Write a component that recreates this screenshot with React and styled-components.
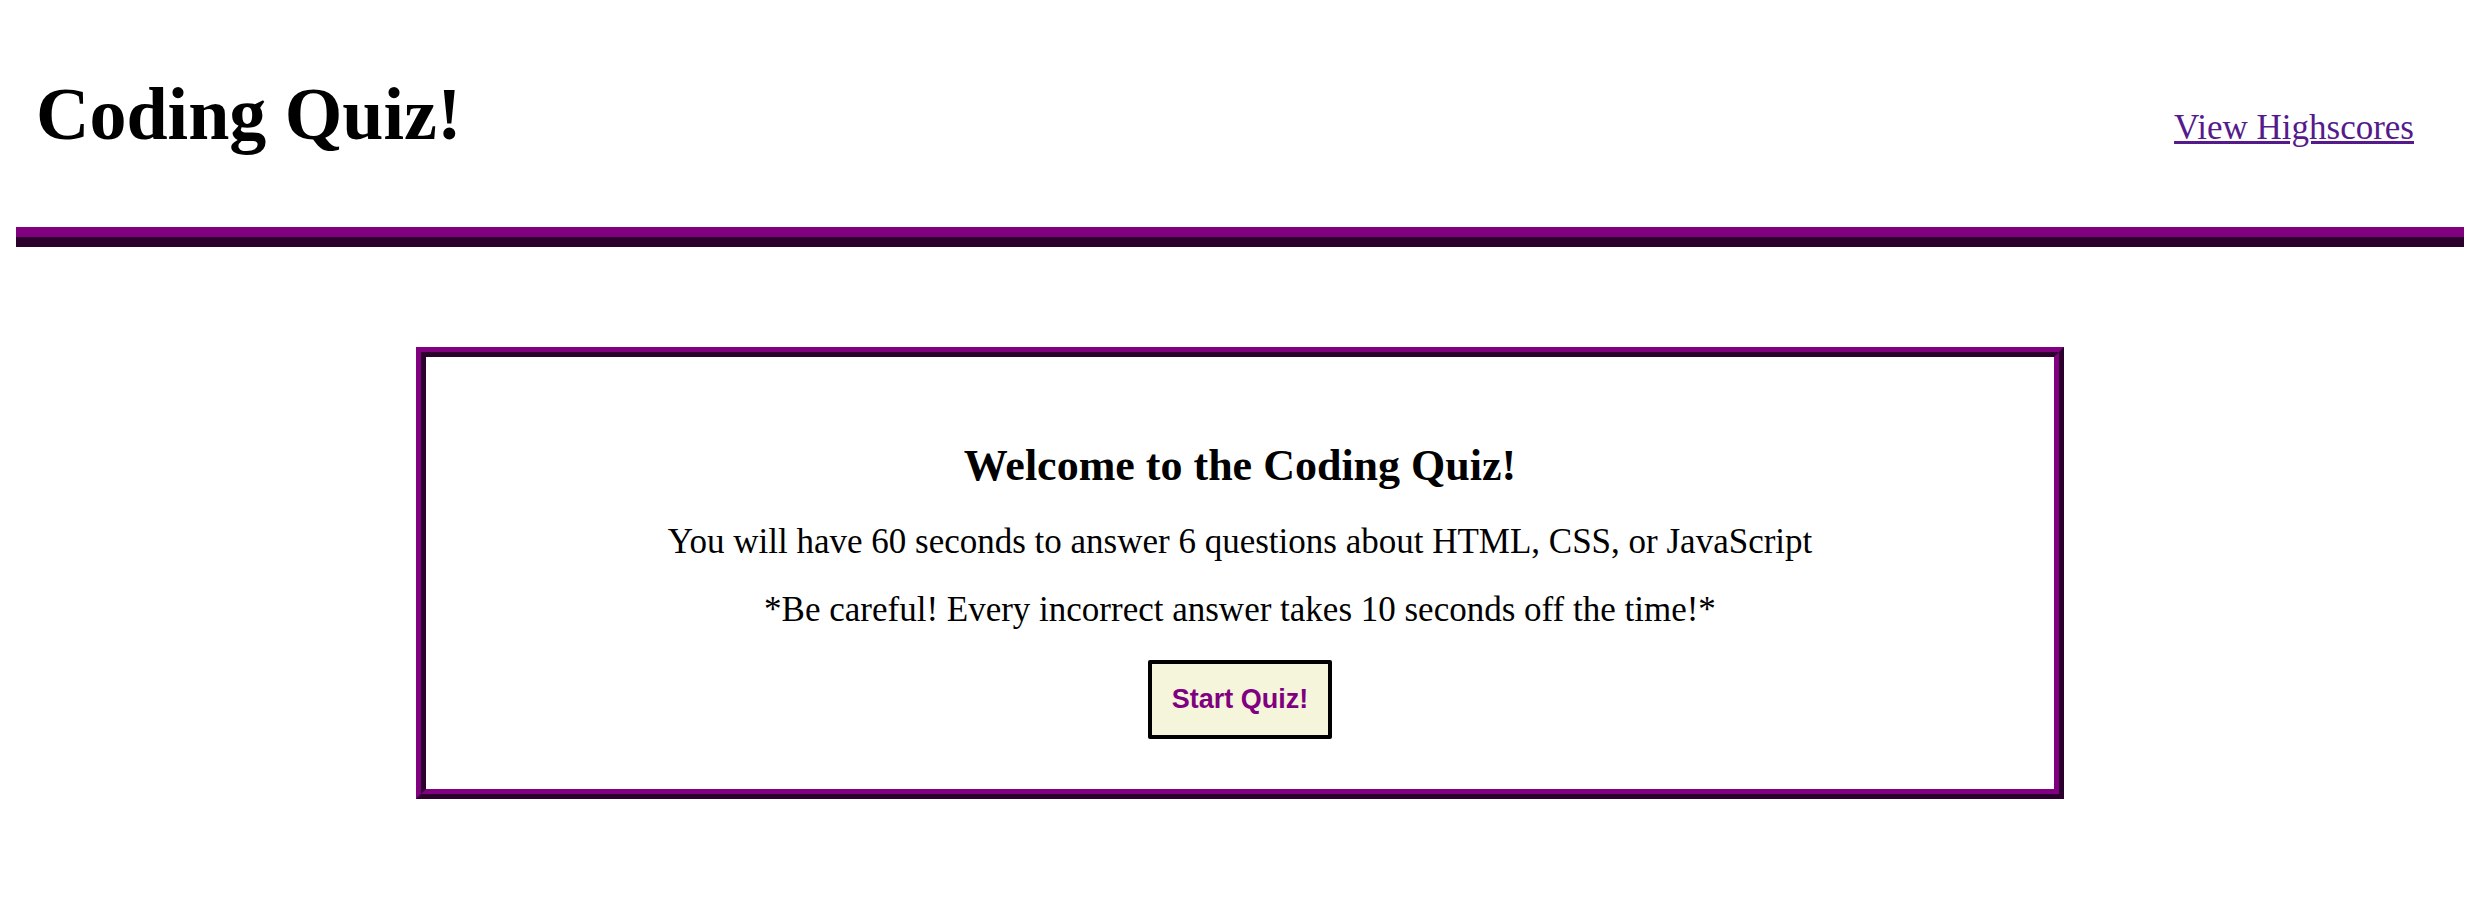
import styled, { createGlobalStyle } from "styled-components";

const GlobalStyle = createGlobalStyle`
  *, *::before, *::after {
    box-sizing: border-box;
  }

  body {
    margin: 16px;
    background: #ffffff;
    color: #000000;
    font-family: "Liberation Serif", serif;
    font-size: 35px;
    line-height: 36px;
  }
`;

const Header = styled.header`
  display: flex;
  flex-wrap: wrap;
  align-items: baseline;
  justify-content: space-between;
  gap: 20px;
  padding: 61px 50px 76px 20px;
  border-bottom: 20px ridge purple;
`;

const Title = styled.h1`
  margin: 0;
  font-size: 74px;
  line-height: 74px;
`;

const ScoresLink = styled.a`
  color: #551a8b;
  text-decoration: underline;
  text-decoration-thickness: 3px;
`;

const Card = styled.main`
  display: flex;
  flex-direction: column;
  align-items: center;
  gap: 32px;
  margin: 100px 400px;
  padding: 83px 20px 50px;
  border: 10px ridge purple;
  text-align: center;
`;

const Welcome = styled.h2`
  margin: 0;
  font-size: 44px;
  line-height: 52px;
`;

const Text = styled.p`
  margin: 0;
`;

const StartButton = styled.button`
  padding: 20px;
  border: 4px solid #000000;
  border-radius: 2px;
  background: beige;
  color: purple;
  font-family: "Liberation Sans", sans-serif;
  font-size: 27px;
  font-weight: bold;
  line-height: 31px;
  cursor: pointer;
`;

export default function App() {
  return (
    <>
      <GlobalStyle />
      <Header>
        <Title>Coding Quiz!</Title>
        <ScoresLink href="#highscores">View Highscores</ScoresLink>
      </Header>
      <Card>
        <Welcome>Welcome to the Coding Quiz!</Welcome>
        <Text>
          You will have 60 seconds to answer 6 questions about HTML, CSS, or
          JavaScript
        </Text>
        <Text>
          *Be careful! Every incorrect answer takes 10 seconds off the time!*
        </Text>
        <StartButton type="button">Start Quiz!</StartButton>
      </Card>
    </>
  );
}
